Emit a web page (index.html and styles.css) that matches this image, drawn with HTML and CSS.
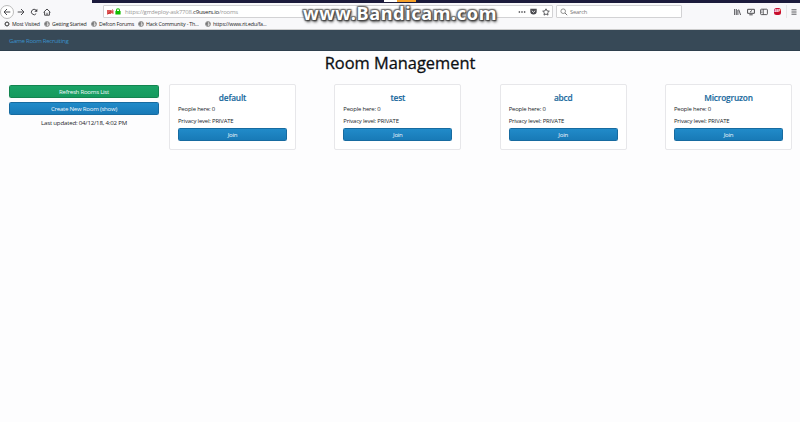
FILE: index.html
```html
<!DOCTYPE html>
<html lang="en">
<head>
<meta charset="utf-8">
<title>Room Management</title>
<link rel="stylesheet" href="styles.css">
</head>
<body>
<svg width="0" height="0" class="defs">
  <symbol id="globe" viewBox="0 0 12 12"><circle cx="6" cy="6" r="5" fill="#e8e8e8" stroke="#666" stroke-width="1.3"/><path d="M2 4l3-2 2 2-2 2 1 2-1 2-3-3zM8 2l2 3-2 2 1 2" fill="#777" stroke="#777" stroke-width=".6"/></symbol>
</svg>
<header class="browser">
  <div class="tabs"><span class="tab-light"></span><span class="tab-orange"></span></div>
  <div class="toolbar">
    <span class="back"><svg width="8" height="8" viewBox="0 0 8 8"><path d="M7.3 4H1M4 1L1 4l3 3"/></svg></span>
    <svg class="forward" width="8" height="8" viewBox="0 0 8 8"><path d="M.7 4H7M4 1l3 3-3 3"/></svg>
    <svg class="reload" width="8" height="8" viewBox="0 0 8 8"><path d="M6.2 5.7A2.7 2.7 0 1 1 6 2.1"/><path d="M7.3.7v3H4.3z" fill="#3b3b3f" stroke="none"/></svg>
    <svg class="home" width="8" height="8" viewBox="0 0 8 8"><path d="M.6 4.3L4 1l3.4 3.3M1.6 4v3.2h4.8V4M4 7V4.8"/></svg>
    <div class="url">
      <svg class="perm" width="7" height="6" viewBox="0 0 7 6"><path d="M0 1h4v4H0z" fill="#d55"/><path d="M4 2.5L6.5 1v4L4 4z" fill="#d55"/><path d="M.5 5.5L6 .5" stroke="#b22" stroke-width=".8"/></svg>
      <svg class="lock" width="6" height="7" viewBox="0 0 6 7"><path d="M1.5 3.3V2.2a1.5 1.5 0 0 1 3 0v1.1" fill="none" stroke="#12bc00" stroke-width="1.1"/><rect x=".4" y="3" width="5.2" height="3.6" rx=".5" fill="#12bc00"/></svg>
      <span class="address">https://grrdeploy-ask7708.<b>c9users.io</b>/rooms</span>
      <svg class="dots" width="8" height="8" viewBox="0 0 8 8"><path d="M.7 4h1.4M3.3 4h1.4M5.9 4h1.4" stroke-width="1.4"/></svg>
      <svg class="pocket" width="7" height="7" viewBox="0 0 7 7"><path d="M.3.7h6.4v2.6a3.2 3.2 0 0 1-6.4 0z" fill="#4a4a4f" stroke="none"/><path d="M1.8 2.7l1.7 1.6 1.7-1.6" stroke="#fff" stroke-width=".9"/></svg>
      <svg class="star" width="8" height="8" viewBox="0 0 8 8"><path d="M4 .8l1 2.1 2.3.3-1.7 1.6.4 2.3-2-1.1-2 1.1.4-2.3L.7 3.2 3 2.9z" stroke-width=".9"/></svg>
    </div>
    <div class="search"><svg width="8" height="8" viewBox="0 0 8 8"><circle cx="3.2" cy="3.2" r="2.3" stroke-width=".8"/><path d="M5 5l2.2 2.2"/></svg><span>Search</span></div>
    <svg class="library" width="7" height="8" viewBox="0 0 7 8"><path d="M.6 1v6M2.3 1v6M3.9 2v5M4.7 1.5L6.6 7" stroke-width=".9"/></svg>
    <svg class="sync" width="8" height="8" viewBox="0 0 8 8"><path d="M.6 1.3h6.8v4H.6zM2.3 6.8h3.4M3 4.2l2-1.8"/></svg>
    <svg class="sidebar" width="8" height="8" viewBox="0 0 8 8"><rect x=".6" y="1.2" width="6.8" height="5.4" rx=".8" stroke-width=".9"/><path d="M3.3 1.2v5.4M1.4 3h1M1.4 4.6h1" stroke-width=".8"/></svg>
    <span class="abp">ABP</span>
    <span class="divider"></span>
    <svg class="menu" width="6" height="8" viewBox="0 0 6 8"><path d="M.5 1.8h5M.5 4h5M.5 6.2h5" stroke-width=".9"/></svg>
  </div>
  <nav class="bookmarks">
    <span class="b1"><svg viewBox="0 0 12 12"><circle cx="6" cy="6" r="3.3" fill="none" stroke="#444" stroke-width="1.5"/><path d="M6 0v3M6 9v3M0 6h3M9 6h3M1.8 1.8l2 2M8.2 8.2l2 2M1.8 10.2l2-2M8.2 3.8l2-2" stroke="#444" stroke-width="1.5"/></svg>Most Visited</span>
    <span class="b2"><svg><use href="#globe"/></svg>Getting Started</span>
    <span class="b3"><svg><use href="#globe"/></svg>Defcon Forums</span>
    <span class="b4"><svg><use href="#globe"/></svg>Hack Community - Th...</span>
    <span class="b5"><svg><use href="#globe"/></svg>https://www.rit.edu/fa...</span>
  </nav>
</header>
<div class="watermark">www.Bandicam.com</div>
<div class="navbar"><a>Game Room Recruiting</a></div>
<main>
  <h1>Room Management</h1>
  <div class="layout">
    <aside>
      <button class="btn green">Refresh Rooms List</button>
      <button class="btn">Create New Room (show)</button>
      <p>Last updated: 04/12/18, 4:02 PM</p>
    </aside>
    <section class="rooms">
      <article><h2>default</h2><p>People here: 0</p><p>Privacy level: PRIVATE</p><button class="btn">Join</button></article>
      <article><h2>test</h2><p>People here: 0</p><p>Privacy level: PRIVATE</p><button class="btn">Join</button></article>
      <article><h2>abcd</h2><p>People here: 0</p><p>Privacy level: PRIVATE</p><button class="btn">Join</button></article>
      <article><h2>Microgruzon</h2><p>People here: 0</p><p>Privacy level: PRIVATE</p><button class="btn">Join</button></article>
    </section>
  </div>
</main>
</body>
</html>
```
FILE: styles.css
```css
* { box-sizing: border-box; }
body { margin: 0; height: 422px; overflow: hidden; background: #fdfdfe; color: #212529; font-family: "Open Sans", "Noto Sans", sans-serif; font-size: 6px; }
.defs { position: absolute; }
h1, h2, p { margin: 0; }
.browser { height: 30px; background: #f8f8fa; border-bottom: 1px solid #ccc; }
.tabs { height: 3px; margin-left: 92px; padding-left: 292px; background: #1c1b3c; display: flex; }
.tab-light { width: 13px; height: 2px; background: #fff; }
.tab-orange { width: 19px; height: 2px; background: #f7a128; }
.toolbar { height: 17px; display: flex; align-items: center; }
.toolbar svg { flex: none; fill: none; stroke: #4a4a4e; stroke-width: 1; }
.back { flex: none; width: 14px; height: 14px; border: 1px solid #bbb; border-radius: 50%; background: #fff; display: flex; align-items: center; justify-content: center; }
.forward { margin-left: 3px; }
.reload { margin-left: 5px; }
.home { margin-left: 5px; }
.url { width: 450px; height: 13px; flex: none; margin-left: 52px; padding: 0 2px 0 3px; display: flex; align-items: center; background: #fff; border: 1px solid #d2d2d4; border-radius: 1px; }
.toolbar .url .perm, .toolbar .url .lock { stroke: none; }
.lock { margin-left: 1px; }
.address { width: 388px; margin-left: 4px; color: #999; font-size: 6px; white-space: nowrap; letter-spacing: -.23px; }
.address b { font-weight: 400; color: #222; }
.dots { margin-left: 5px; }
.pocket { margin-left: 4px; }
.star { margin-left: 5px; }
.search { width: 126px; height: 13px; flex: none; margin-left: 3px; padding-left: 3px; display: flex; align-items: center; gap: 2px; background: #fff; border: 1px solid #d2d2d4; border-radius: 1px; color: #777; font-size: 5.8px; letter-spacing: -.2px; }
.toolbar .search svg { stroke: #777; }
.library { margin-left: 52px; }
.sync { margin-left: 6px; }
.sidebar { margin-left: 5px; }
.abp { flex: none; width: 7px; height: 7px; margin-left: 6px; border-radius: 2.5px; background: #c70d2c; color: #fff; font-size: 3px; font-weight: 700; line-height: 7px; text-align: center; }
.divider { width: 1px; height: 13px; margin-left: 5px; background: #e6e6e9; }
.menu { margin-left: 4px; }
.bookmarks { height: 8px; padding-left: 4px; display: flex; align-items: center; font-size: 5.3px; letter-spacing: -.2px; color: #222; white-space: nowrap; }
.bookmarks span { display: flex; align-items: center; gap: 2px; flex: none; }
.bookmarks svg { width: 6px; height: 6px; flex: none; }
.b1 { width: 40px; }
.b2 { width: 47px; }
.b3 { width: 47px; }
.b4 { width: 67px; }
.bookmarks .b5 { letter-spacing: -.22px; }
.watermark { position: absolute; left: 300px; top: 2px; width: 200px; text-align: center; color: #fff; font: 700 18.2px/22px "Noto Sans", sans-serif; letter-spacing: .6px; text-shadow: 0 0 1px #444, 1px 1px 1px #444, -1px -1px 1px #777, 1px -1px 1px #777, -1px 1px 1px #666, 0 0 3px #555, 1px 2px 3px #444; white-space: nowrap; }
.navbar { height: 21px; padding-left: 9px; display: flex; align-items: center; background: #374957; border-bottom: 1px solid #2e3f4d; }
.navbar a { color: #3a91c9; font-size: 6.1px; letter-spacing: -.3px; }
h1 { height: 33px; padding-top: 1px; text-align: center; font-size: 16.4px; line-height: 22px; font-weight: 400; color: #0c0f13; -webkit-text-stroke: .3px; }
.layout { display: flex; padding: 0 8px 0 9px; gap: 10px; }
aside { width: 150px; flex: none; padding-top: 1px; text-align: center; }
.btn { display: block; width: 100%; height: 13px; padding: 0; border: 1px solid #176ba0; border-radius: 1.5px; background: linear-gradient(#218bc9, #187ab7); color: #f0f7fc; font: 6.1px/11px "Open Sans", sans-serif; letter-spacing: -.25px; text-align: center; }
aside .btn { margin-bottom: 4px; }
.btn.green { border-color: #138550; background: linear-gradient(#1ba367, #159a5e); }
aside p { line-height: 9px; margin-top: -1px; font-size: 6.1px; letter-spacing: -.18px; }
.rooms { flex: 1; display: flex; justify-content: space-between; }
article { width: 127px; height: 66px; padding: 7px 8px; border: 1px solid #e7e7ea; border-radius: 2px; background: #fff; }
h2 { font-size: 8.3px; line-height: 12px; font-weight: 600; letter-spacing: -.18px; text-align: center; color: #1a6a9e; -webkit-text-stroke: .15px; }
article p { line-height: 8px; margin-top: 1px; font-size: 5.9px; letter-spacing: -.17px; }
article p + p { margin-top: 4px; margin-bottom: 3px; }
```
